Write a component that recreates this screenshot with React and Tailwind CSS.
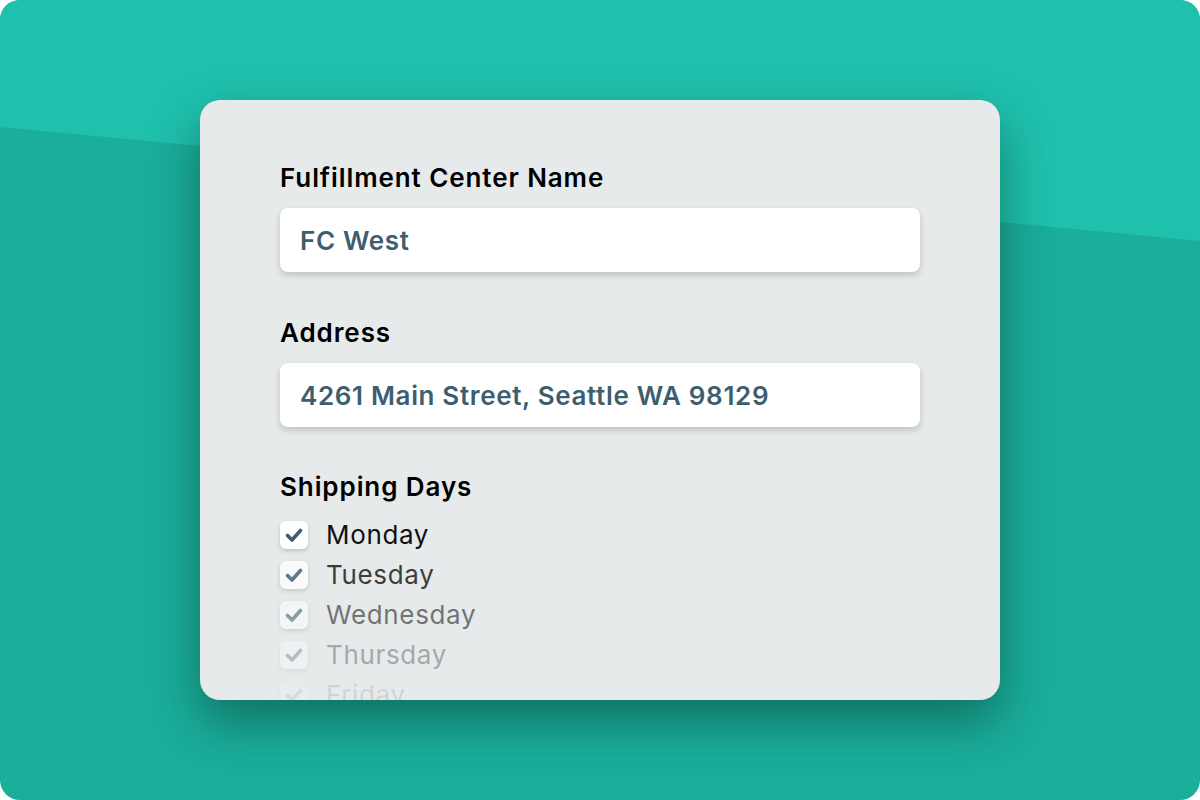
const days = [
  { name: 'Monday', fade: 'opacity-100' },
  { name: 'Tuesday', fade: 'opacity-80' },
  { name: 'Wednesday', fade: 'opacity-55' },
  { name: 'Thursday', fade: 'opacity-30' },
  { name: 'Friday', fade: 'opacity-10' },
]

function Check() {
  return (
    <svg width="28" height="28" viewBox="0 0 28 28">
      <polyline
        points="7.5,14.5 12,19 20.5,9.5"
        fill="none"
        stroke="#3e5e6d"
        strokeWidth="3.6"
        strokeLinecap="round"
        strokeLinejoin="round"
      />
    </svg>
  )
}

function Field({ label, value }) {
  return (
    <div className="flex flex-col">
      <label className="text-[26px] leading-8 font-semibold tracking-[0.035em] text-black">{label}</label>
      <div className="mt-[14px] h-16 rounded-lg bg-white px-5 flex items-center shadow-[0_3px_6px_rgba(0,0,0,0.18)]">
        <span className="text-[26px] font-semibold tracking-[0.025em] text-[#3d5e6e]">{value}</span>
      </div>
    </div>
  )
}

export default function App() {
  return (
    <div className="w-[1200px] h-[800px] bg-white" style={{ fontFamily: 'Inter, "Noto Sans", sans-serif' }}>
      <div className="relative w-full h-full rounded-[20px] overflow-hidden bg-[#1aae9b] flex items-center justify-center">
        {/* lighter top band with slanted edge */}
        <div className="absolute inset-0 bg-[#1fc1ad] [clip-path:polygon(0_0,100%_0,100%_241px,0_127px)]" />

        <div className="relative w-[800px] h-[600px] rounded-[20px] bg-[#e7eaeb] overflow-hidden shadow-[0_22px_50px_rgba(0,40,30,0.45)] px-20 pt-[62px]">
          <div className="flex flex-col gap-[45px]">
            <Field label="Fulfillment Center Name" value="FC West" />
            <Field label="Address" value="4261 Main Street, Seattle WA 98129" />
          </div>

          <div className="mt-[44px]">
            <div className="text-[26px] leading-8 font-semibold tracking-[0.035em] text-black">Shipping Days</div>
            <div className="mt-[18px] flex flex-col gap-3">
              {days.map((d) => (
                <div key={d.name} className={`flex items-center gap-[18px] ${d.fade}`}>
                  <div className="w-7 h-7 shrink-0 rounded-md bg-white shadow-[0_2px_4px_rgba(0,0,0,0.18)]">
                    <Check />
                  </div>
                  <span className="text-[26px] leading-7 tracking-[0.025em] text-[#111]">{d.name}</span>
                </div>
              ))}
            </div>
          </div>
        </div>
      </div>
    </div>
  )
}
